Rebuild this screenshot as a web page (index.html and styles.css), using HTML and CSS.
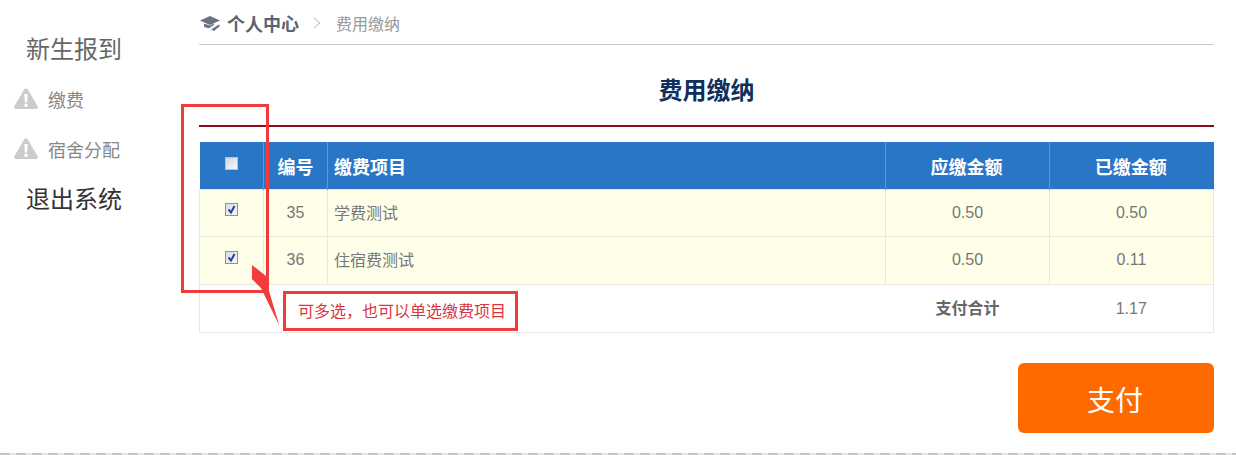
FILE: index.html
```html
<!DOCTYPE html>
<html lang="zh-CN">

<head>
    <meta charset="UTF-8">
    <title>费用缴纳</title>
    <link rel="stylesheet" href="styles.css">
</head>

<body>
    <div class="page">
        <aside class="side">
            <a class="side__title">新生报到</a>
            <a class="side__item">
                <svg class="warn" viewBox="0 0 24 22"><path d="M12 .5c1 0 1.700.5 2.200 1.400l9.300 16c.9 1.600 0 3.100-1.800 3.100H2.300C.5 21-.4 19.500.5 17.900l9.300-16C10.300 1 11 .5 12 .5z" fill="#ccc"/><path d="M10.300 6h3.400l-.6 8.500h-2.200zM10.400 15.800h3.200v3h-3.200z" fill="#fff"/></svg>
                缴费
            </a>
            <a class="side__item">
                <svg class="warn" viewBox="0 0 24 22"><path d="M12 .5c1 0 1.700.5 2.200 1.400l9.300 16c.9 1.600 0 3.100-1.800 3.100H2.300C.5 21-.4 19.500.5 17.900l9.300-16C10.300 1 11 .5 12 .5z" fill="#ccc"/><path d="M10.300 6h3.400l-.6 8.500h-2.200zM10.400 15.800h3.200v3h-3.200z" fill="#fff"/></svg>
                宿舍分配
            </a>
            <a class="side__title side__title--dark">退出系统</a>
        </aside>

        <main class="main">
            <div class="crumb">
                <svg class="crumb__icon" viewBox="0 0 21 15"><path d="M10 0 20 4.500 10 9 0 4.500z" fill="#6b7285"/><path d="M4 7.500v3c1.500 1.200 3.200 1.700 5 1.700l5-3.200v-1.500l-4 2z" fill="#6b7285"/><path d="M11 13.500l8-5 1 1.500-6 5z" fill="#6b7285"/></svg>
                <b class="crumb__home">个人中心</b>
                <svg class="crumb__sep" viewBox="0 0 8 12"><path d="M1 1l6 5-6 5" fill="none" stroke="#b5b5b5"/></svg>
                <span class="crumb__now">费用缴纳</span>
            </div>

            <h1 class="title">费用缴纳</h1>

            <table class="pay">
                <colgroup>
                    <col class="col-check">
                    <col class="col-no">
                    <col>
                    <col class="col-money">
                    <col class="col-money">
                </colgroup>
                <tr class="pay__head">
                    <th><input class="check" type="checkbox"></th>
                    <th>编号</th>
                    <th class="left">缴费项目</th>
                    <th class="money">应缴金额</th>
                    <th class="money">已缴金额</th>
                </tr>
                <tr class="pay__row">
                    <td><input class="check" type="checkbox" checked></td>
                    <td>35</td>
                    <td class="left">学费测试</td>
                    <td>0.50</td>
                    <td>0.50</td>
                </tr>
                <tr class="pay__row">
                    <td><input class="check" type="checkbox" checked></td>
                    <td>36</td>
                    <td class="left">住宿费测试</td>
                    <td>0.50</td>
                    <td>0.11</td>
                </tr>
                <tr class="pay__sum">
                    <td colspan="3"></td>
                    <td class="pay__label"><b>支付合计</b></td>
                    <td class="pay__total">1.17</td>
                </tr>
            </table>

            <div class="actions">
                <button class="paybtn">支付</button>
            </div>
        </main>

        <!-- marks drawn on top of the screenshot -->
        <div class="mark-box"></div>
        <svg class="mark-arrow" viewBox="0 0 32 66"><path d="M2 1 16 12 19 27 29.500 62 11 24 2 15z" fill="#f23c3c"/></svg>
        <div class="mark-note">可多选，也可以单选缴费项目</div>
    </div>
</body>

</html>
```

FILE: styles.css
```css
* {
    margin: 0;
    padding: 0;
    box-sizing: border-box;
}

body {
    background-color: #fff;
    font-family: "Liberation Sans", "Noto Sans CJK SC", sans-serif;
    color: #666;
}

.page {
    position: relative;
    display: flex;
    width: 1236px;
    height: 455px;
    background: repeating-linear-gradient(90deg, #c4c4c4 0 10px, #e6e6e6 10px 16px) left bottom / 100% 2px no-repeat;
    overflow: hidden;
}

.side {
    width: 199px;
    padding-top: 30px;
}

.side__title {
    display: block;
    height: 40px;
    margin-left: 26px;
    font-size: 24px;
    line-height: 40px;
    color: #666;
}

.side__title--dark {
    color: #333;
}

.side__item {
    display: flex;
    align-items: center;
    gap: 10px;
    height: 50px;
    margin-left: 14px;
    font-size: 18px;
    color: #888;
}

.side__title + .side__item {
    margin-top: 4px;
}

.side__item + .side__title {
    margin-top: 6px;
}

.warn {
    width: 24px;
    height: 22px;
}

.main {
    width: 1015px;
}

.crumb {
    display: flex;
    align-items: center;
    height: 45px;
    padding: 2px 0 0 1px;
    border-bottom: 1px solid #ccc;
}

.crumb__icon {
    width: 21px;
    height: 15px;
    margin-right: 6px;
}

.crumb__home {
    font-size: 18px;
    color: #5c6375;
}

.crumb__sep {
    width: 8px;
    height: 12px;
    margin: 0 15px 0 14px;
}

.crumb__now {
    font-size: 16px;
    color: #999;
}

.title {
    height: 82px;
    border-bottom: 2px solid #8e0c1a;
    font-size: 24px;
    line-height: 91px;
    text-align: center;
    color: #0f2f5c;
}

.pay {
    width: 1015px;
    margin-top: 15px;
    border-collapse: collapse;
    table-layout: fixed;
    font-size: 16px;
}

.col-check {
    width: 64px;
}

.col-no {
    width: 64px;
}

.col-money {
    width: 164px;
}

.pay th,
.pay td {
    text-align: center;
}

.pay .left {
    padding-left: 6px;
    text-align: left;
}

.pay__row .left {
    padding-bottom: 2px;
}

.pay__head {
    height: 47px;
    background-color: #2a76c6;
    color: #fff;
    font-size: 18px;
}

.pay__head th {
    padding-top: 2px;
    border-left: 1px solid #5c97d6;
}

.pay__head th:first-child {
    padding-top: 0;
    border-left: 0;
}

.pay__head .money {
    padding-right: 2px;
}

.pay__row {
    height: 48px;
    background-color: #fffee9;
    color: #777;
}

.pay__head + .pay__row {
    height: 47px;
}

.pay__row td {
    border: 1px solid #e8e8e0;
}

.pay__sum {
    height: 48px;
    color: #777;
}

.pay__sum td {
    border-top: 1px solid #e6e6e6;
    border-bottom: 1px solid #e6e6e6;
}

.pay__sum td:first-child {
    border-left: 1px solid #e6e6e6;
}

.pay__sum td:last-child {
    border-right: 1px solid #e6e6e6;
}

.pay__sum .pay__label {
    padding-bottom: 2px;
}

.pay__sum .pay__total {
    padding-top: 2px;
}

.pay__sum b {
    color: #666;
}

.check {
    appearance: none;
    display: block;
    width: 13px;
    height: 13px;
    margin: -6px auto 0;
    border: 1px solid #8a93a8;
    background: linear-gradient(135deg, #d9dde6, #f6f7fa);
}

.pay__head .check {
    margin-top: -4px;
    border-color: #b8c0cc;
    background: linear-gradient(135deg, #cfd3da, #fafafa);
}

.check:checked {
    background: url("data:image/svg+xml,%3Csvg xmlns='http://www.w3.org/2000/svg' viewBox='0 0 11 11'%3E%3Cpath d='M2.500 5.500 5 8.500 8.500 2' fill='none' stroke='%232f3f9a' stroke-width='2'/%3E%3C/svg%3E") center no-repeat, linear-gradient(135deg, #d9dde6, #f6f7fa);
}

.actions {
    display: flex;
    justify-content: flex-end;
    margin-top: 30px;
}

.paybtn {
    width: 196px;
    height: 70px;
    padding: 2px 2px 0 0;
    border: 0;
    border-radius: 6px;
    background-color: #ff6a00;
    color: #fff;
    font-family: inherit;
    font-size: 28px;
}

.mark-box {
    position: absolute;
    left: 181px;
    top: 104px;
    width: 88px;
    height: 189px;
    border: 3px solid #f23c3c;
}

.mark-arrow {
    position: absolute;
    left: 250px;
    top: 264px;
    width: 32px;
    height: 66px;
}

.mark-note {
    position: absolute;
    left: 283px;
    top: 291px;
    width: 235px;
    height: 40px;
    border: 3px solid #f23c3c;
    background-color: #fff;
    padding-left: 12px;
    font-size: 16px;
    line-height: 36px;
    color: #d9363e;
}
```
